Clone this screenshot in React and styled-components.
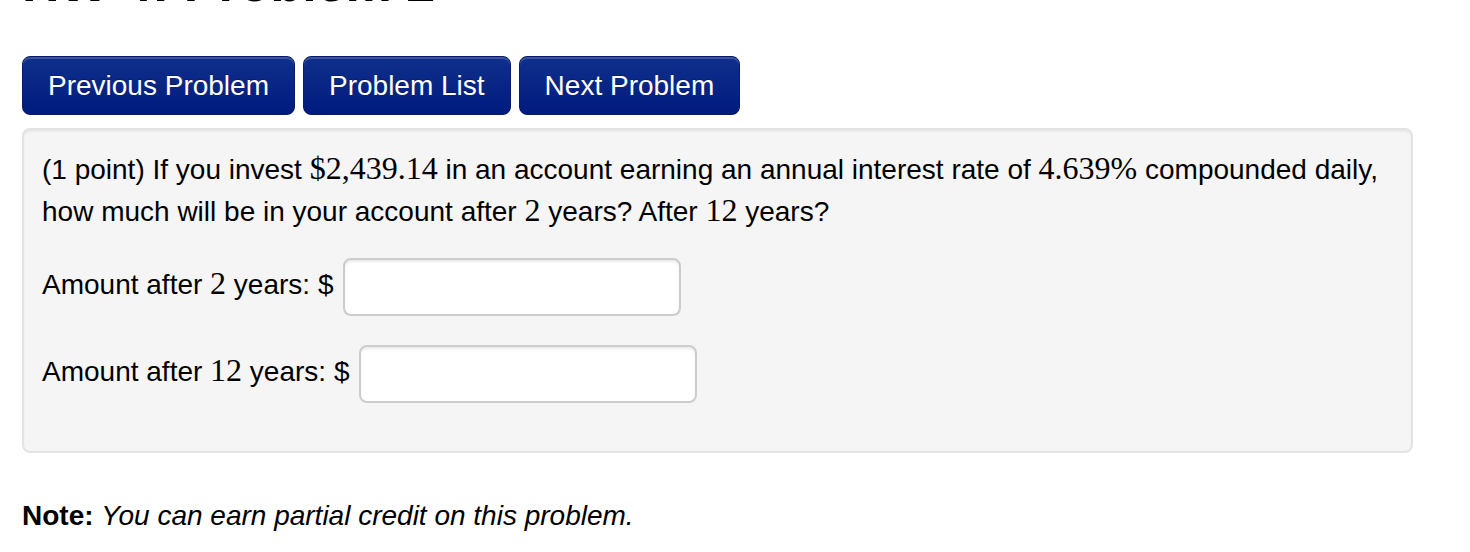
import React from "react";
import styled, { createGlobalStyle } from "styled-components";

const GlobalStyle = createGlobalStyle`
  html, body {
    margin: 0;
    padding: 0;
    background: #ffffff;
  }
  body {
    font-family: "Liberation Sans", Arial, Helvetica, sans-serif;
    color: #000;
    font-size: 28px;
  }
`;

const Page = styled.div`
  padding: 0 0 0 22px;
  overflow: hidden;
  height: 552px;
`;

const Title = styled.h1`
  margin: -47px 0 0;
  font-size: 52px;
  line-height: 60px;
  font-weight: bold;
  white-space: nowrap;
`;

const Toolbar = styled.div`
  display: flex;
  gap: 8px;
  margin-top: 43px;
`;

const NavButton = styled.a`
  display: inline-block;
  padding: 12px 25px;
  line-height: 33px;
  font-size: 28px;
  color: #fff;
  text-decoration: none;
  border: 1px solid #0a1a66;
  border-radius: 8px;
  background: linear-gradient(to bottom, #10308c 0%, #001a7e 100%);
  box-shadow: inset 0 2px 0 rgba(255, 255, 255, 0.18);
  text-shadow: 0 -1px 0 rgba(0, 0, 0, 0.25);
  cursor: pointer;
`;

const Well = styled.div`
  box-sizing: border-box;
  width: 1391px;
  margin-top: 13px;
  padding: 18px 18px 48px;
  background: #f5f5f5;
  border: 2px solid #e3e3e3;
  border-radius: 8px;
  box-shadow: inset 0 2px 2px rgba(0, 0, 0, 0.05);
`;

const Question = styled.p`
  margin: 0;
  line-height: 40px;
  white-space: nowrap;
`;

const M = styled.span`
  font-family: "Liberation Serif", "Times New Roman", serif;
  font-size: 32px;
`;

const AnswerRow = styled.div`
  display: flex;
  align-items: flex-start;
  gap: 10px;
  height: 58px;
  margin-top: ${(p) => p.$top}px;
`;

const Label = styled.span`
  line-height: 51px;
  white-space: nowrap;
`;

const AnswerInput = styled.input`
  box-sizing: border-box;
  width: 338px;
  height: 58px;
  border: 2px solid #cccccc;
  border-radius: 8px;
  background: #fff;
  box-shadow: inset 0 2px 2px rgba(0, 0, 0, 0.075);
  font-size: 28px;
  padding: 0 12px;
  margin: 0;
  outline: none;
`;

const Note = styled.p`
  margin: 43px 0 0;
  line-height: 40px;
  i {
    font-style: italic;
  }
`;

export default function App() {
  return (
    <>
      <GlobalStyle />
      <Page>
        <Title>HW 4: Problem 2</Title>
        <Toolbar>
          <NavButton>Previous Problem</NavButton>
          <NavButton>Problem List</NavButton>
          <NavButton>Next Problem</NavButton>
        </Toolbar>
        <Well>
          <Question>
            (1 point) If you invest <M>$2,439.14</M> in an account earning an
            annual interest rate of <M>4.639%</M> compounded daily,
            <br />
            how much will be in your account after <M>2</M> years? After{" "}
            <M>12</M> years?
          </Question>
          <AnswerRow $top={26}>
            <Label>
              Amount after <M>2</M> years: $
            </Label>
            <AnswerInput type="text" />
          </AnswerRow>
          <AnswerRow $top={29}>
            <Label>
              Amount after <M>12</M> years: $
            </Label>
            <AnswerInput type="text" />
          </AnswerRow>
        </Well>
        <Note>
          <b>Note:</b> <i>You can earn partial credit on this problem.</i>
        </Note>
      </Page>
    </>
  );
}
